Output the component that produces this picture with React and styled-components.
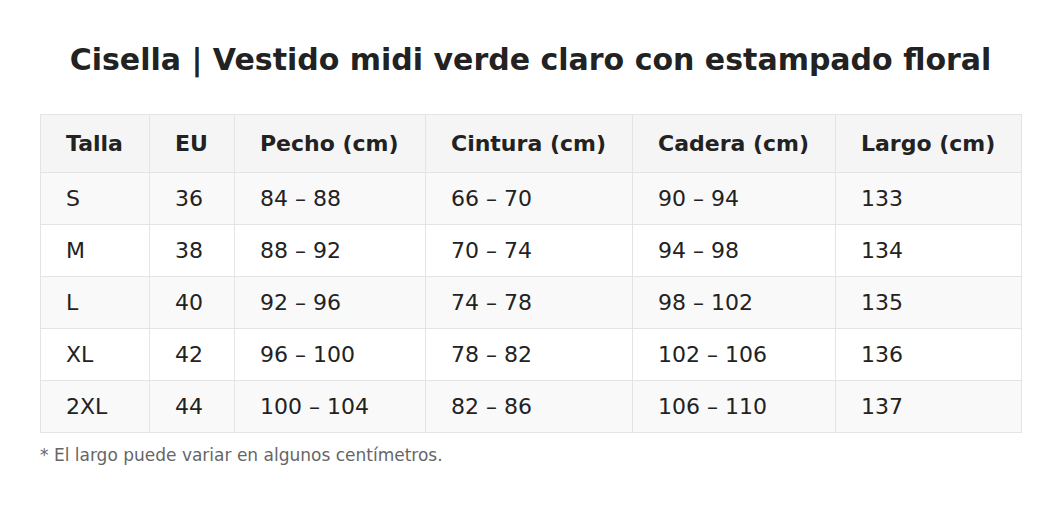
import React from "react";
import styled, { createGlobalStyle } from "styled-components";

const Global = createGlobalStyle`
  html, body { margin: 0; padding: 0; background: #ffffff; }
  body { font-family: "DejaVu Sans", Verdana, sans-serif; color: #222222; }
`;

const Page = styled.div`
  padding: 42px 40px 0 40px;
`;

const Title = styled.h1`
  margin: 0 0 36px 0;
  font-size: 30px;
  font-weight: 700;
  text-align: center;
  color: #222222;
  line-height: 36px;
`;

const Table = styled.table`
  width: 981px;
  table-layout: fixed;
  border-collapse: collapse;
  font-size: 22px;
`;

const HeadCell = styled.th`
  text-align: left;
  font-weight: 700;
  padding: 16px 25px;
  line-height: 25px;
  background: #f5f5f5;
  border: 1px solid #e4e4e4;
  color: #222222;
`;

const Row = styled.tr`
  background: ${(p) => (p.$striped ? "#f9f9f9" : "#ffffff")};
`;

const Cell = styled.td`
  padding: 13px 25px;
  line-height: 25px;
  border: 1px solid #e4e4e4;
  color: #222222;
`;

const Note = styled.p`
  margin: 12px 0 0 0;
  font-size: 17px;
  color: #666666;
`;

const widths = [109, 85, 191, 207, 203, 186];
const headers = ["Talla", "EU", "Pecho (cm)", "Cintura (cm)", "Cadera (cm)", "Largo (cm)"];
const rows = [
  ["S", "36", "84 – 88", "66 – 70", "90 – 94", "133"],
  ["M", "38", "88 – 92", "70 – 74", "94 – 98", "134"],
  ["L", "40", "92 – 96", "74 – 78", "98 – 102", "135"],
  ["XL", "42", "96 – 100", "78 – 82", "102 – 106", "136"],
  ["2XL", "44", "100 – 104", "82 – 86", "106 – 110", "137"],
];

export default function App() {
  return (
    <>
      <Global />
      <Page>
        <Title>Cisella | Vestido midi verde claro con estampado floral</Title>
        <Table>
          <colgroup>
            {widths.map((w, i) => (
              <col key={i} style={{ width: w }} />
            ))}
          </colgroup>
          <thead>
            <tr>
              {headers.map((h) => (
                <HeadCell key={h}>{h}</HeadCell>
              ))}
            </tr>
          </thead>
          <tbody>
            {rows.map((r, i) => (
              <Row key={r[0]} $striped={i % 2 === 0}>
                {r.map((c, j) => (
                  <Cell key={j}>{c}</Cell>
                ))}
              </Row>
            ))}
          </tbody>
        </Table>
        <Note>* El largo puede variar en algunos centímetros.</Note>
      </Page>
    </>
  );
}
